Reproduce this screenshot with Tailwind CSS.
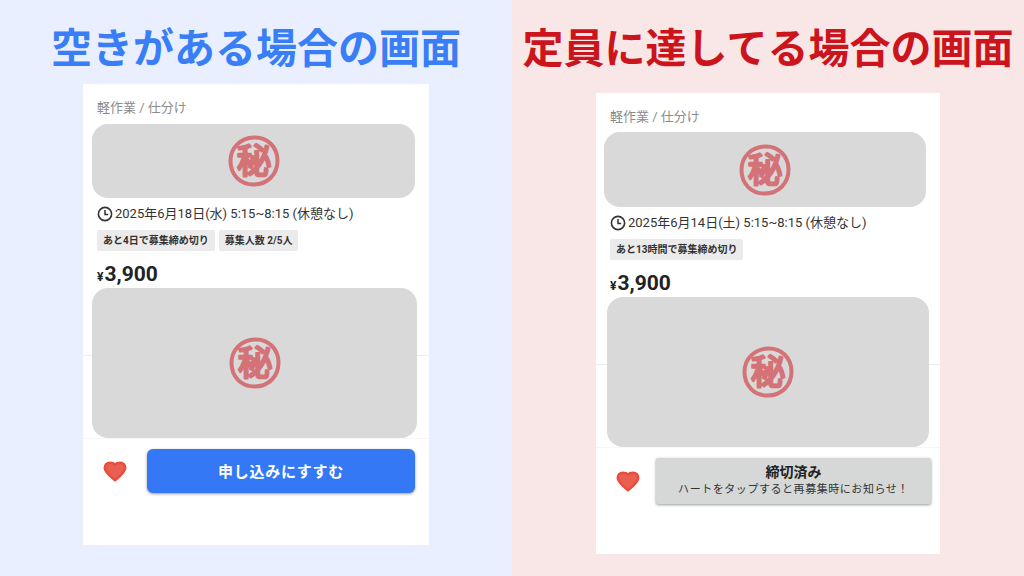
<!DOCTYPE html>
<html lang="ja">
<head>
  <meta charset="UTF-8" />
  <meta name="viewport" content="width=device-width, initial-scale=1.0" />
  <title>募集画面の比較</title>
  <script src="https://cdn.jsdelivr.net/npm/@tailwindcss/browser@4"></script>
</head>
<body class="font-[Roboto,'Noto_Sans_CJK_JP',sans-serif] text-[#333333]">
  <!-- shared shapes -->
  <svg class="hidden">
    <symbol id="stamp" viewBox="0 0 52 52">
      <path d="M26 2.500C39.500 2 49.500 12 49.500 25.500C49.500 39.500 39.500 49.500 25.500 49.500C12 49.500 2.500 39.500 2.500 26C2.500 12.500 12.500 3 26 2.500Z" fill="none" stroke="currentColor" stroke-width="4" />
      <text x="26" y="38" text-anchor="middle" font-size="34" font-weight="400" fill="currentColor" stroke="currentColor" stroke-width="2.500" stroke-linejoin="round">秘</text>
    </symbol>
    <symbol id="clock" viewBox="0 0 16 16">
      <circle cx="8" cy="8" r="6.600" fill="none" stroke="currentColor" stroke-width="1.600" />
      <path d="M8 4V8.400H11.200" fill="none" stroke="currentColor" stroke-width="1.500" />
    </symbol>
    <symbol id="heart" viewBox="0 0 24 21">
      <path d="M12 19.200C8 15.800 1.800 11.500 1.800 6.800C1.800 3.800 4 1.800 6.700 1.800C9 1.800 11 2.400 12 3.600C13 2.400 15 1.800 17.300 1.800C20 1.800 22.200 3.800 22.200 6.800C22.200 11.500 16 15.800 12 19.200Z" fill="#e95f52" stroke="#ea4d3c" stroke-width="2.600" stroke-linejoin="round" />
    </symbol>
  </svg>

  <main class="grid min-h-screen grid-cols-2">
    <section class="flex flex-col items-center bg-[#e9effe] pt-[21px]">
      <h1 class="text-[41px] leading-14 font-bold whitespace-nowrap text-[#397ef7]">空きがある場合の画面</h1>
      <article class="mt-[7px] w-full max-w-[346px] bg-white pb-13">
        <p class="px-3.5 pt-3 text-[13px] leading-6 text-[#8c8c8c]">軽作業 / 仕分け</p>
        <div class="mt-1 mr-3.5 ml-[9px] flex h-[74px] items-center justify-center rounded-2xl bg-[#d9d9d9]">
          <svg class="size-[52px] text-[#d37377]"><use href="#stamp" /></svg>
        </div>
        <div class="mt-1 flex items-center gap-0.5 px-3.5 text-[13px] leading-6">
          <svg class="size-4"><use href="#clock" /></svg>
          <p class="whitespace-nowrap">2025年6月18日(水) 5:15~8:15 (休憩なし)</p>
        </div>
        <ul class="mt-1 flex gap-1 px-3.5 text-[10px] leading-[21px] font-bold">
          <li class="rounded-xs bg-[#ebebeb] px-1.5">あと4日で募集締め切り</li>
          <li class="rounded-xs bg-[#ebebeb] px-1.5">募集人数 2/5人</li>
        </ul>
        <p class="mt-[9px] flex items-baseline gap-px px-3.5 text-[21px] leading-7 font-bold text-[#222222]"><span class="text-xs">¥</span>3,900</p>
        <div class="relative border-b border-[#faf6f7]">
          <hr class="absolute inset-x-0 top-[67px] border-[#eeeeee]" />
          <div class="relative mr-3 ml-[9px] flex h-[150px] items-center justify-center rounded-2xl bg-[#d9d9d9]">
            <svg class="size-[52px] text-[#d37377]"><use href="#stamp" /></svg>
          </div>
        </div>
        <div class="mt-2.5 mr-3.5 ml-5 flex items-center gap-5">
          <button type="button" aria-label="お気に入り"><svg class="h-[21px] w-6"><use href="#heart" /></svg></button>
          <button type="button" class="h-11 flex-1 rounded-md bg-[#3478f6] pt-0.5 text-[15px] font-bold tracking-wider text-white shadow-[0_1px_3px_rgb(0,0,0,0.4)]">申し込みにすすむ</button>
        </div>
      </article>
    </section>

    <section class="flex flex-col items-center bg-[#f9e6e6] pt-[21px]">
      <h1 class="text-[41px] leading-14 font-bold whitespace-nowrap text-[#cb141b]">定員に達してる場合の画面</h1>
      <article class="mt-4 w-full max-w-[344px] bg-white pb-[50px]">
        <p class="px-3.5 pt-3 text-[13px] leading-6 text-[#8c8c8c]">軽作業 / 仕分け</p>
        <div class="mt-[3px] mr-3.5 ml-2 flex h-[75px] items-center justify-center rounded-2xl bg-[#d9d9d9]">
          <svg class="size-[52px] text-[#d37377]"><use href="#stamp" /></svg>
        </div>
        <div class="mt-1 flex items-center gap-0.5 px-3.5 text-[13px] leading-6">
          <svg class="size-4"><use href="#clock" /></svg>
          <p class="whitespace-nowrap">2025年6月14日(土) 5:15~8:15 (休憩なし)</p>
        </div>
        <ul class="mt-1 flex gap-1 px-3.5 text-[10px] leading-[21px] font-bold">
          <li class="rounded-xs bg-[#ebebeb] px-1.5">あと13時間で募集締め切り</li>
        </ul>
        <p class="mt-[9px] flex items-baseline gap-px px-3.5 text-[21px] leading-7 font-bold text-[#222222]"><span class="text-xs">¥</span>3,900</p>
        <div class="relative border-b border-[#f8f6fa]">
          <hr class="absolute inset-x-0 top-[67px] border-[#eeeeee]" />
          <div class="relative mr-[11px] ml-[11px] flex h-[150px] items-center justify-center rounded-2xl bg-[#d9d9d9]">
            <svg class="size-[52px] text-[#d37377]"><use href="#stamp" /></svg>
          </div>
        </div>
        <div class="mt-2.5 mr-[9px] ml-5 flex items-center gap-4">
          <button type="button" aria-label="お気に入り"><svg class="h-[21px] w-6"><use href="#heart" /></svg></button>
          <button type="button" class="h-[46px] flex-1 rounded-xs bg-[#d5d8d7] shadow-[0_1px_3px_rgb(0,0,0,0.4)]">
            <span class="block text-sm leading-[18px] font-bold text-[#222222]">締切済み</span>
            <span class="block text-[11px] leading-[18px] tracking-wider whitespace-nowrap">ハートをタップすると再募集時にお知らせ！</span>
          </button>
        </div>
      </article>
    </section>
  </main>
</body>
</html>
